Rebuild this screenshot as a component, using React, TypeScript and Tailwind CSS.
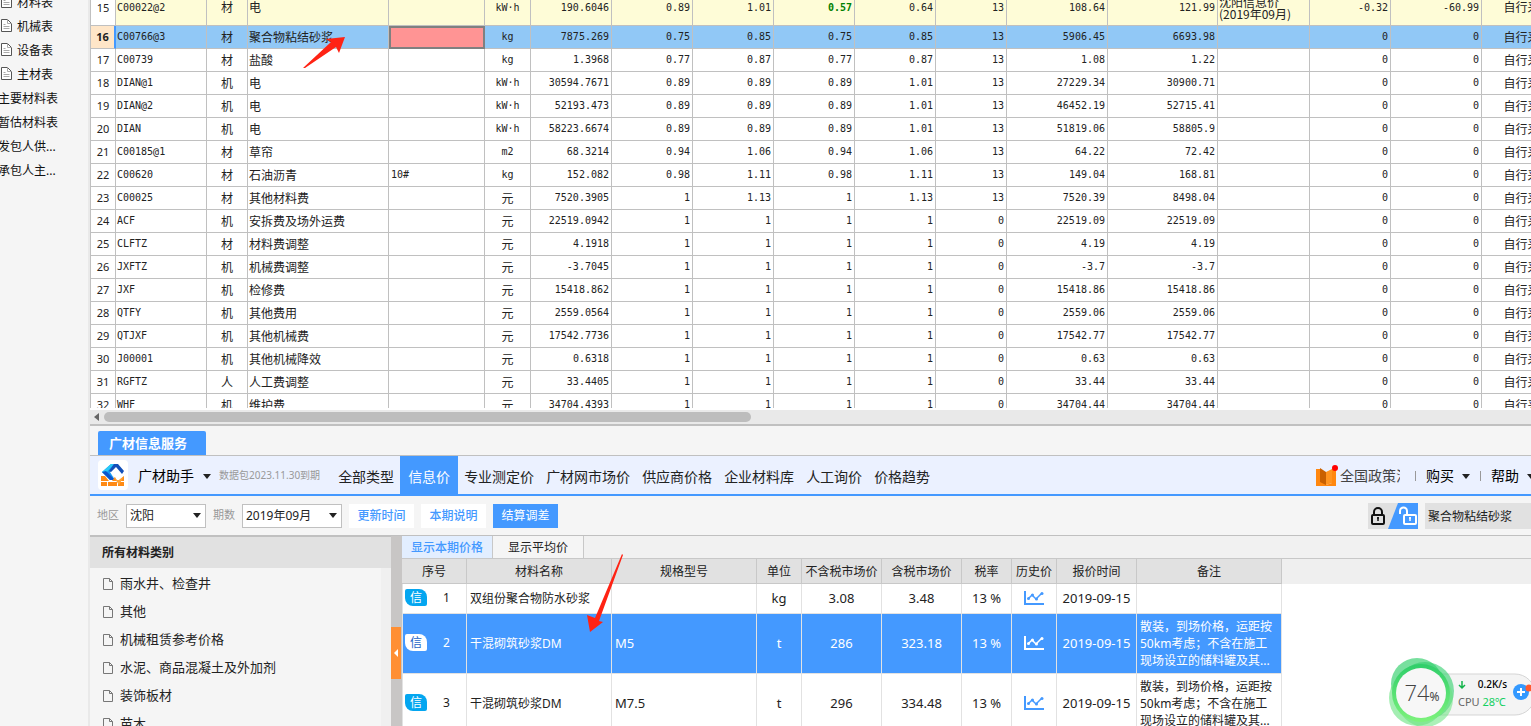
import { useState } from 'react';

type Row = {
  no: number;
  code: string;
  type: string;
  name: string;
  spec?: string;
  unit: string;
  nums: string[];
  source?: string;
  diff?: string;
  diffTotal?: string;
};

const rows: Row[] = [
  { no: 15, code: 'C00022@2', type: '材', name: '电', unit: 'kW·h', nums: ['190.6046', '0.89', '1.01', '0.57', '0.64', '13', '108.64', '121.99'], source: '沈阳信息价 (2019年09月)', diff: '-0.32', diffTotal: '-60.99' },
  { no: 16, code: 'C00766@3', type: '材', name: '聚合物粘结砂浆', unit: 'kg', nums: ['7875.269', '0.75', '0.85', '0.75', '0.85', '13', '5906.45', '6693.98'] },
  { no: 17, code: 'C00739', type: '材', name: '盐酸', unit: 'kg', nums: ['1.3968', '0.77', '0.87', '0.77', '0.87', '13', '1.08', '1.22'] },
  { no: 18, code: 'DIAN@1', type: '机', name: '电', unit: 'kW·h', nums: ['30594.7671', '0.89', '0.89', '0.89', '1.01', '13', '27229.34', '30900.71'] },
  { no: 19, code: 'DIAN@2', type: '机', name: '电', unit: 'kW·h', nums: ['52193.473', '0.89', '0.89', '0.89', '1.01', '13', '46452.19', '52715.41'] },
  { no: 20, code: 'DIAN', type: '机', name: '电', unit: 'kW·h', nums: ['58223.6674', '0.89', '0.89', '0.89', '1.01', '13', '51819.06', '58805.9'] },
  { no: 21, code: 'C00185@1', type: '材', name: '草帘', unit: 'm2', nums: ['68.3214', '0.94', '1.06', '0.94', '1.06', '13', '64.22', '72.42'] },
  { no: 22, code: 'C00620', type: '材', name: '石油沥青', spec: '10#', unit: 'kg', nums: ['152.082', '0.98', '1.11', '0.98', '1.11', '13', '149.04', '168.81'] },
  { no: 23, code: 'C00025', type: '材', name: '其他材料费', unit: '元', nums: ['7520.3905', '1', '1.13', '1', '1.13', '13', '7520.39', '8498.04'] },
  { no: 24, code: 'ACF', type: '机', name: '安拆费及场外运费', unit: '元', nums: ['22519.0942', '1', '1', '1', '1', '0', '22519.09', '22519.09'] },
  { no: 25, code: 'CLFTZ', type: '材', name: '材料费调整', unit: '元', nums: ['4.1918', '1', '1', '1', '1', '0', '4.19', '4.19'] },
  { no: 26, code: 'JXFTZ', type: '机', name: '机械费调整', unit: '元', nums: ['-3.7045', '1', '1', '1', '1', '0', '-3.7', '-3.7'] },
  { no: 27, code: 'JXF', type: '机', name: '检修费', unit: '元', nums: ['15418.862', '1', '1', '1', '1', '0', '15418.86', '15418.86'] },
  { no: 28, code: 'QTFY', type: '机', name: '其他费用', unit: '元', nums: ['2559.0564', '1', '1', '1', '1', '0', '2559.06', '2559.06'] },
  { no: 29, code: 'QTJXF', type: '机', name: '其他机械费', unit: '元', nums: ['17542.7736', '1', '1', '1', '1', '0', '17542.77', '17542.77'] },
  { no: 30, code: 'J00001', type: '机', name: '其他机械降效', unit: '元', nums: ['0.6318', '1', '1', '1', '1', '0', '0.63', '0.63'] },
  { no: 31, code: 'RGFTZ', type: '人', name: '人工费调整', unit: '元', nums: ['33.4405', '1', '1', '1', '1', '0', '33.44', '33.44'] },
  { no: 32, code: 'WHF', type: '机', name: '维护费', unit: '元', nums: ['34704.4393', '1', '1', '1', '1', '0', '34704.44', '34704.44'] },
];

const gridCols = [26, 91, 41, 141, 96, 46, 81, 81, 81, 81, 81, 71, 101, 110, 92, 81, 91, 92];

const reports = [
  { label: '材料表', icon: true },
  { label: '机械表', icon: true },
  { label: '设备表', icon: true },
  { label: '主材表', icon: true },
  { label: '主要材料表' },
  { label: '暂估材料表' },
  { label: '发包人供...' },
  { label: '承包人主...' },
];

const categories = ['雨水井、检查井', '其他', '机械租赁参考价格', '水泥、商品混凝土及外加剂', '装饰板材', '苗木'];

const navItems = ['全部类型', '信息价', '专业测定价', '广材网市场价', '供应商价格', '企业材料库', '人工询价', '价格趋势'];

const priceCols = [65, 145, 145, 45, 80, 80, 50, 45, 80, 145];
const priceHeads = ['序号', '材料名称', '规格型号', '单位', '不含税市场价', '含税市场价', '税率', '历史价', '报价时间', '备注'];

const note = '散装，到场价格，运距按50km考虑；不含在施工现场设立的储料罐及其...';
const prices = [
  { name: '双组份聚合物防水砂浆', spec: '', unit: 'kg', net: '3.08', gross: '3.48', note: '' },
  { name: '干混砌筑砂浆DM', spec: 'M5', unit: 't', net: '286', gross: '323.18', note },
  { name: '干混砌筑砂浆DM', spec: 'M7.5', unit: 't', net: '296', gross: '334.48', note },
];

function Caret({ className = '' }: { className?: string }) {
  return (
    <svg viewBox="0 0 8 5" className={`h-[5px] w-2 shrink-0 ${className}`}>
      <path d="M0 0h8L4 5z" fill="#222" />
    </svg>
  );
}

function PageIcon() {
  return (
    <svg viewBox="0 0 11 13" className="mb-1 h-[13px] w-[11px] shrink-0">
      <path d="M.5.5h6l4 4v8H.5z" fill="#fff" stroke="#555" />
      <path d="M6.5.5v4h4M2.500 5.500h2M2.500 7.500h6M2.500 9.500h6" fill="none" stroke="#aaa" />
    </svg>
  );
}

function FileIcon() {
  return (
    <svg viewBox="0 0 10 12" className="h-3 w-[10px] shrink-0">
      <path d="M.5.5h6l3 3v8H.5zM6.500.5v3h3" fill="none" stroke="#777" />
    </svg>
  );
}

function Logo() {
  return (
    <svg viewBox="0 0 30 30" className="h-[30px] w-[30px] shrink-0">
      <rect width="30" height="30" rx="4" fill="#fff" />
      <path d="M13 4h6l-7 8 5 8h-5l-8-8z" fill="#1798f2" />
      <path d="M13 4h3L7 14l-3-2z" fill="#2bcaf7" />
      <path d="M4 12l4-1 9 9h-5z" fill="#0d55cc" />
      <path d="M16 4h4l6 7-2 3-6-7-5 5-2-1z" fill="#1450b8" />
      <path d="M3 16h4l4 5H3zM14 21l3-4 2 4zM20 21l6-5v5zM3 22h6v4H3zM10 22h9v4h-9zM20 22h6v4h-6z" fill="#ff8a14" />
      <path d="m15 16 4 4h2l5-4-5 9z" fill="#ffa436" />
    </svg>
  );
}

function BookIcon() {
  return (
    <svg viewBox="0 0 22 22" className="h-[22px] w-[22px] shrink-0">
      <path d="M0 4h4l6 4v13H0z" fill="#ff870f" />
      <path d="m4 3 6 4v13l-6-3z" fill="#c96000" />
      <path d="M10 7l6-3v14l-6 2z" fill="#ff9420" />
      <path d="M16 4h4v17H10v-1l6-2z" fill="#ff870f" />
      <circle cx="19" cy="3" r="3" fill="#f00" />
    </svg>
  );
}

function LockToggle() {
  return (
    <svg viewBox="0 0 50 26" className="h-[26px] w-[50px]">
      <path d="M0 0h50v26H0z" fill="#e0e0e0" />
      <path d="M30 0h20v26H20z" fill="#4499ff" />
      <rect x="4" y="12" width="12" height="9" rx="1" fill="none" stroke="#111" strokeWidth="2" />
      <path d="M6 11V9a4 4 0 0 1 8 0v2" fill="none" stroke="#111" strokeWidth="2" />
      <path d="M10 14v4M9 15h2" stroke="#111" strokeWidth="1.500" />
      <rect x="36" y="12" width="12" height="9" rx="1" fill="none" stroke="#fff" strokeWidth="2" />
      <path d="M32 11V8a3.500 3.500 0 0 1 7 0v3" fill="none" stroke="#fff" strokeWidth="2" />
      <path d="M42 14v4M41 15h2" stroke="#fff" strokeWidth="1.500" />
    </svg>
  );
}

function Badge({ active }: { active: boolean }) {
  return (
    <span
      className={`flex h-[17px] w-[22px] shrink-0 items-center justify-center rounded-tl-[2px] rounded-tr-lg rounded-br-[2px] rounded-bl-lg text-xs ${
        active ? 'bg-white text-[#1d64c8]' : 'bg-[#04a6f0] text-white'
      }`}
    >
      信
    </span>
  );
}

function TrendIcon() {
  return (
    <svg viewBox="0 0 20 14" className="mx-auto mb-0.5 h-[14px] w-5" fill="none" stroke="currentColor">
      <path d="M1 0v13h19" strokeWidth="2" />
      <path d="m4 8 4-4 4 4 6-6" strokeWidth="1.500" />
      <circle cx="4.500" cy="7.500" r="1.500" fill="currentColor" stroke="none" />
      <circle cx="8.500" cy="4" r="1.500" fill="currentColor" stroke="none" />
      <circle cx="12.500" cy="8" r="1.500" fill="currentColor" stroke="none" />
      <circle cx="18" cy="2.500" r="1.500" fill="currentColor" stroke="none" />
    </svg>
  );
}

function Picker({ label, value, className }: { label: string; value: string; className: string }) {
  return (
    <label className="flex items-center gap-[7px] text-[11px] text-[#999]">
      {label}
      <span className={`relative block ${className}`}>
        <select className="h-6 w-full appearance-none border border-[#c0c0c0] bg-white pl-[3px] text-xs text-[#222] outline-none">
          <option>{value}</option>
        </select>
        <Caret className="pointer-events-none absolute top-[9px] right-[5px]" />
      </span>
    </label>
  );
}

function MaterialGrid() {
  const line = 'border-r border-b border-[#c0c0c0] p-0';
  const cjk = "font-['Noto_Sans_CJK_SC',sans-serif] text-xs leading-3";

  return (
    <table className="-mt-[10px] w-[1484px] table-fixed border-separate border-spacing-0 font-['DejaVu_Sans_Mono','Noto_Sans_CJK_SC',monospace] text-[10px] leading-3 text-[#222]">
      <colgroup>
        {gridCols.map((w, i) => (
          <col key={i} style={{ width: w }} />
        ))}
      </colgroup>
      <tbody>
        {rows.map((r) => {
          const active = r.no === 16;
          const first = r.no === 15;
          return (
            <tr
              key={r.no}
              className={active ? 'h-[23px] bg-[#91c8f6]' : first ? 'h-9 bg-[#fefcd7]' : 'h-[23px] bg-white'}
            >
              <td
                className={`border-b border-l border-[#c0c0c0] p-0 text-center font-['Noto_Sans',sans-serif] text-[11px] ${
                  active ? 'border-r-2 border-r-[#4499ff] bg-[#ffe6c8] font-bold' : 'border-r bg-white'
                }`}
              >
                {r.no}
              </td>
              <td className={`${line} pl-px`}>{r.code}</td>
              <td className={`${line} ${cjk} pb-px text-center`}>{r.type}</td>
              <td className={`${line} ${cjk} pb-px pl-px whitespace-nowrap`}>{r.name}</td>
              <td className={`${line} pl-0.5 ${active ? 'bg-[#ff9494] outline-2 -outline-offset-2 outline-[#808080]' : ''}`}>
                {r.spec}
              </td>
              <td className={`${line} text-center ${r.unit === '元' ? `${cjk} pb-px` : ''}`}>{r.unit}</td>
              {r.nums.map((n, i) => (
                <td
                  key={i}
                  className={`${line} pr-0.5 text-right ${first && i === 3 ? 'font-bold text-[#008000]' : ''}`}
                >
                  {n}
                </td>
              ))}
              <td className={`${line} ${cjk} pl-px`}>{r.source}</td>
              <td className={`${line} pr-0.5 text-right`}>{r.diff ?? '0'}</td>
              <td className={`${line} pr-0.5 text-right`}>{r.diffTotal ?? '0'}</td>
              <td className={`${line} ${cjk} pb-px text-center`}>自行采购</td>
            </tr>
          );
        })}
      </tbody>
    </table>
  );
}

function PriceTable() {
  const [selected, setSelected] = useState(1);

  return (
    <table className="w-[880px] table-fixed border-separate border-spacing-0 text-xs text-[#222]">
      <colgroup>
        {priceCols.map((w, i) => (
          <col key={i} style={{ width: w }} />
        ))}
      </colgroup>
      <thead>
        <tr className="h-[25px] bg-[#e1e1e1]">
          {priceHeads.map((h) => (
            <th key={h} className="border-r border-b border-[#c8c8c8] p-0 pt-0.5 font-normal whitespace-nowrap">
              {h}
            </th>
          ))}
        </tr>
      </thead>
      <tbody>
        {prices.map((p, i) => {
          const active = i === selected;
          const cell = 'border-r border-b border-[#e2e2e2] p-0';
          return (
            <tr
              key={i}
              onClick={() => setSelected(i)}
              className={`${i === 0 ? 'h-[30px]' : 'h-[60px]'} ${active ? 'bg-[#4499ff] text-white' : 'bg-white'}`}
            >
              <td className={`${cell} border-l`}>
                <div className="flex items-center pb-0.5 pl-0.5">
                  <Badge active={active} />
                  <span className="flex-1 text-center">{i + 1}</span>
                </div>
              </td>
              <td className={`${cell} pl-[3px] whitespace-nowrap`}>{p.name}</td>
              <td className={`${cell} pl-[3px] text-[13px]`}>{p.spec}</td>
              <td className={`${cell} text-center text-[13px]`}>{p.unit}</td>
              <td className={`${cell} text-center text-[13px]`}>{p.net}</td>
              <td className={`${cell} text-center text-[13px]`}>{p.gross}</td>
              <td className={`${cell} text-center text-[13px]`}>13 %</td>
              <td className={`${cell} ${active ? 'text-white' : 'text-[#4499ff]'}`}>
                <TrendIcon />
              </td>
              <td className={`${cell} text-center text-[13px] whitespace-nowrap`}>2019-09-15</td>
              <td className={`${cell} px-[3px] leading-[17px]`}>{p.note}</td>
            </tr>
          );
        })}
      </tbody>
    </table>
  );
}

function InfoService() {
  const [nav, setNav] = useState('信息价');
  const button = 'h-6 w-[65px] text-xs';

  return (
    <section className="flex h-[300px] shrink-0 flex-col bg-[#f5f5f5]">
      <div className="flex h-[30px] shrink-0 items-end border-b border-[#c0c0c0] pl-2">
        <button className="h-6 w-27 rounded-t-[2px] bg-[#4499ff] pt-0.5 pr-2 text-[13px] font-bold text-white">广材信息服务</button>
      </div>

      {/* Main navigation */}
      <nav className="flex h-10 shrink-0 items-center overflow-hidden border-b-2 border-[#4499ff] bg-[#ebf1ff] pl-2 text-sm whitespace-nowrap text-[#222]">
        <Logo />
        <button className="ml-[10px] flex items-center gap-[9px] pt-0.5 text-black">
          广材助手
          <Caret />
        </button>
        <span className="mr-3 ml-2 text-[10px] text-[#999]">数据包2023.11.30到期</span>
        {navItems.map((item) => (
          <button
            key={item}
            onClick={() => setNav(item)}
            className={`h-full pt-1 ${item === nav ? 'bg-[#4499ff] px-2 text-white' : 'px-1.5'}`}
          >
            {item}
          </button>
        ))}
        <div className="ml-auto flex shrink-0 items-center pt-0.5">
          <BookIcon />
          <a href="#policy" className="ml-0.5 w-[60px] overflow-hidden text-[#444]">
            全国政策法规
          </a>
          <i className="mx-[10px] ml-[15px] h-[10px] w-px bg-[#999]" />
          <button className="flex items-center gap-2 text-black">
            购买
            <Caret />
          </button>
          <i className="mx-[10px] h-[10px] w-px bg-[#999]" />
          <button className="-mr-1 flex items-center gap-2 text-black">
            帮助
            <Caret />
          </button>
        </div>
      </nav>

      {/* Filters */}
      <div className="flex h-[39px] shrink-0 items-center gap-[7px] pl-[7px]">
        <Picker label="地区" value="沈阳" className="w-20" />
        <Picker label="期数" value="2019年09月" className="w-25" />
        <button className={`${button} bg-white font-medium text-[#4499ff]`}>更新时间</button>
        <button className={`${button} bg-white font-medium text-[#4499ff]`}>本期说明</button>
        <button className={`${button} bg-[#4499ff] text-white`}>结算调差</button>
        <button aria-label="锁定" className="ml-auto">
          <LockToggle />
        </button>
        <input
          aria-label="搜索"
          defaultValue="聚合物粘结砂浆"
          className="h-[26px] w-[106px] bg-[#e1e1e1] pl-[3px] text-xs text-[#222] outline-none"
        />
      </div>

      <div className="flex min-h-0 flex-1">
        {/* Category tree */}
        <aside className="w-[301px] shrink-0 overflow-hidden border-t-2 border-[#c0c0c0]">
          <h2 className="flex h-[31px] items-center bg-[#e1e1e1] pl-3 text-xs font-bold text-[#222]">所有材料类别</h2>
          <div className="flex">
            <ul className="flex-1 pt-0.5 pl-[13px] text-[13px] text-[#222]">
              {categories.map((c) => (
                <li key={c} className="flex h-7 items-center gap-[7px]">
                  <FileIcon />
                  {c}
                </li>
              ))}
            </ul>
            <div className="w-[10px] bg-[#f0f0f0]" />
          </div>
        </aside>

        <div className="flex w-[11px] shrink-0 items-center border-t border-[#c0c0c0] bg-[#c8c6c5]">
          <button aria-label="收起" className="mt-11 flex h-13 w-[10px] items-center justify-center bg-[#ff8f33]">
            <svg viewBox="0 0 4 8" className="h-2 w-1">
              <path d="M4 0v8L0 4z" fill="#fff" />
            </svg>
          </button>
        </div>

        <div className="min-w-0 flex-1 overflow-hidden border-t border-[#c0c0c0] bg-white">
          <div className="flex h-[23px] border-b border-[#c8c8c8] bg-[#f1f1f1] text-xs">
            <button className="w-[91px] border-r border-[#c8c8c8] bg-[#e2eeff] pt-0.5 font-medium text-[#4499ff]">显示本期价格</button>
            <button className="w-[91px] border-r border-[#c8c8c8] bg-[#f5f5f5] pt-0.5 text-[#222]">显示平均价</button>
          </div>
          <div className="flex items-start">
            <PriceTable />
            <div className="h-[25px] flex-1 bg-[#efefef]" />
          </div>
        </div>
      </div>
    </section>
  );
}

function SystemMonitor() {
  return (
    <div className="absolute right-0 bottom-0 flex h-[70px] w-[144px] items-center overflow-hidden">
      <svg viewBox="0 0 144 70" className="absolute inset-0 h-full w-full">
        <defs>
          <linearGradient id="ring" x1="0" y1="0" x2="0" y2="1">
            <stop offset="0" stopColor="#2fce6a" />
            <stop offset="1" stopColor="#7df27c" />
          </linearGradient>
        </defs>
        <rect x="30" y="18" width="118" height="41" rx="20" fill="#f4f4f4" stroke="#d5d5d5" />
        <circle cx="30" cy="28" r="26" fill="#2fce6a" opacity=".65" />
        <circle cx="38" cy="35" r="29" fill="#2fce6a" opacity=".6" />
        <circle cx="30" cy="42" r="28" fill="#68e37e" opacity=".6" />
        <circle cx="38" cy="43" r="28" fill="#68e37e" opacity=".55" />
        <circle cx="34" cy="37" r="29" fill="url(#ring)" />
        <circle cx="34" cy="37" r="25" fill="#f7f7f7" />
        <path d="M75 25v7m-3-3 3 3 3-3" fill="none" stroke="#12b34a" strokeWidth="1.500" />
        <circle cx="134" cy="36" r="8" fill="#3399ff" />
        <path d="M130 36h8m-4-4v8" stroke="#fff" strokeWidth="2" />
        <circle cx="142" cy="32" r="3.500" fill="#ff5a30" />
      </svg>
      <div className="relative flex w-[70px] shrink-0 items-baseline justify-center pt-0.5 text-[#444]">
        <span className="font-['Open_Sans',sans-serif] text-[22px] font-light">74</span>
        <span className="text-xs">%</span>
      </div>
      <div className="relative w-[50px] pt-1 pl-px font-['Noto_Sans','Noto_Sans_CJK_SC',sans-serif] text-[11px] leading-[18px] whitespace-nowrap text-[#666]">
        <p className="text-right text-[10px] font-medium text-black">0.2K/s</p>
        <p>
          CPU <span className="text-[#12d060]">28℃</span>
        </p>
      </div>
    </div>
  );
}

export default function App() {
  return (
    <main className="relative flex h-screen overflow-hidden bg-[#f5f5f5] font-['Noto_Sans','Noto_Sans_CJK_SC',sans-serif]">
      {/* Report list */}
      <aside className="w-[90px] shrink-0 overflow-hidden border-r-2 border-[#e9e9e9]">
        <ul className="-mt-[9px] text-xs whitespace-nowrap text-[#111]">
          {reports.map((r) => (
            <li key={r.label} className={`flex h-6 items-center gap-[5px] ${r.icon ? 'pl-px' : '-ml-0.5'}`}>
              {r.icon && <PageIcon />}
              {r.label}
            </li>
          ))}
        </ul>
      </aside>

      <div className="flex min-w-0 flex-1 flex-col">
        <div className="min-h-0 flex-1 overflow-hidden bg-white">
          <MaterialGrid />
        </div>

        {/* Horizontal scrollbar */}
        <div className="flex h-[18px] shrink-0 items-center border-t-2 border-b-2 border-t-white border-b-[#c0c0c0] bg-[#e9e9e9] pl-1">
          <svg viewBox="0 0 5 8" className="mr-[5px] h-2 w-[5px]">
            <path d="M5 0v8L0 4z" fill="#666" />
          </svg>
          <div className="h-[10px] w-[45%] rounded-full bg-[#bdbdbd]" />
        </div>

        <InfoService />
      </div>

      {/* Annotation arrows */}
      <svg viewBox="0 0 42 32" className="absolute top-[37px] left-[303px] h-8 w-[42px]">
        <path d="M42 0 23 2l5 3L0 31h2l31-21 3 6z" fill="#ff2314" />
      </svg>
      <svg viewBox="0 0 36 79" className="absolute top-[554px] left-[587px] h-[79px] w-9">
        <path d="M3 78 0 61l8 3L35 0l1 1-24 66 4 1z" fill="#ff2314" />
      </svg>

      <SystemMonitor />
    </main>
  );
}
